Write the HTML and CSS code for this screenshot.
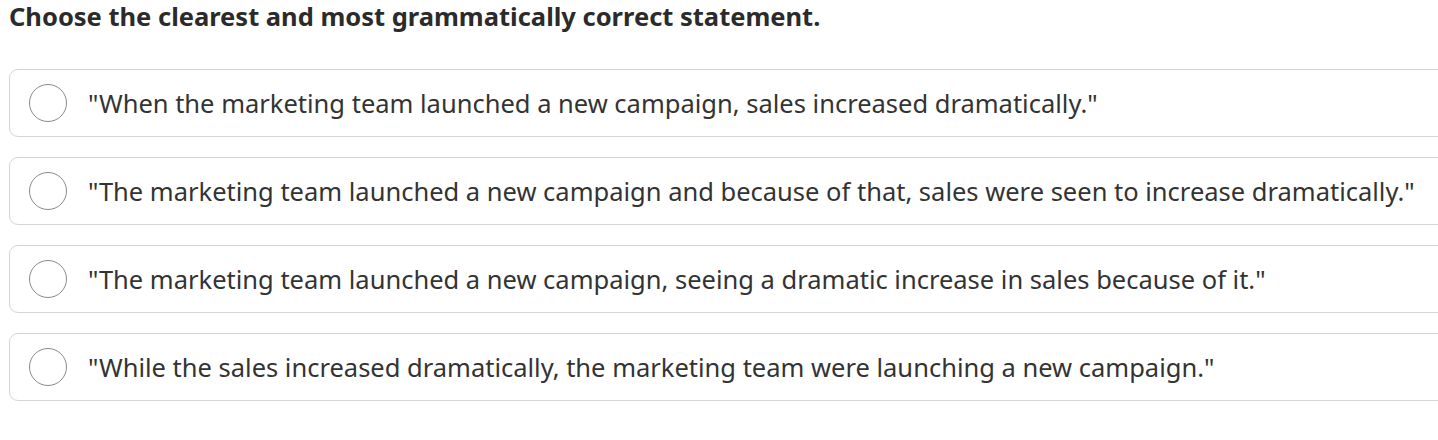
FILE: index.html
```html
<!DOCTYPE html>
<html>
<head>
<meta charset="utf-8">
<link rel="stylesheet" href="styles.css">
</head>
<body>
<div class="question">
  <h1 class="prompt">Choose the clearest and most grammatically correct statement.</h1>
  <div class="options">
    <label class="option"><span class="radio"></span><span class="text">"When the marketing team launched a new campaign, sales increased dramatically."</span></label>
    <label class="option"><span class="radio"></span><span class="text">"The marketing team launched a new campaign and because of that, sales were seen to increase dramatically."</span></label>
    <label class="option"><span class="radio"></span><span class="text">"The marketing team launched a new campaign, seeing a dramatic increase in sales because of it."</span></label>
    <label class="option"><span class="radio"></span><span class="text">"While the sales increased dramatically, the marketing team were launching a new campaign."</span></label>
  </div>
</div>
</body>
</html>
```
FILE: styles.css
```css
html, body {
  margin: 0;
  padding: 0;
  background: #ffffff;
  overflow: hidden;
}
.question {
  padding: 0 0 0 9px;
  font-family: "Noto Sans", "Open Sans", sans-serif;
  color: #333333;
}
.prompt {
  margin: 0;
  font-size: 25.5px;
  font-weight: 700;
  line-height: 32px;
  color: #2b2b2b;
}
.options {
  margin-top: 37px;
  display: flex;
  flex-direction: column;
  gap: 20px;
}
.option {
  width: 1460px;
  height: 68px;
  box-sizing: border-box;
  border: 1px solid #d4d4d4;
  border-radius: 9px;
  display: flex;
  align-items: center;
  padding-left: 19px;
  cursor: pointer;
}
.radio {
  width: 38px;
  height: 38px;
  box-sizing: border-box;
  border: 1px solid #8a8a8a;
  border-radius: 50%;
  flex: none;
}
.text {
  margin-left: 21px;
  font-size: 25.5px;
  line-height: 34px;
  color: #333333;
}
```
